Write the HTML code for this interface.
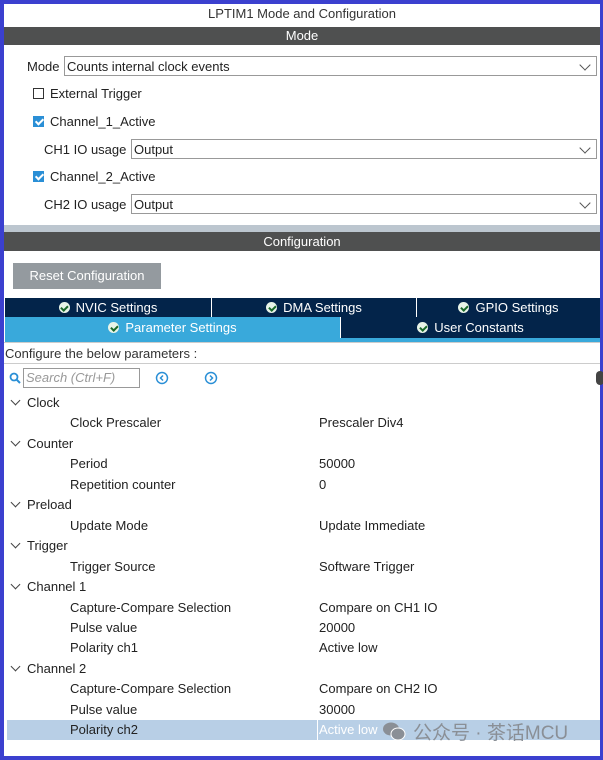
<!DOCTYPE html><html><head><style>
body{margin:0;width:603px;height:760px;background:#3b40cf;font-family:"Liberation Sans",sans-serif;position:relative;overflow:hidden}
.p{position:absolute;left:4px;top:4px;width:596px;height:752px;background:#fff}
.a{position:absolute;font-size:13px;color:#222;white-space:nowrap}
.bar{position:absolute;left:0;width:596px;height:18px;background:#4f5050;color:#fff;text-align:center;font-size:13px;line-height:18px}
.sel{position:absolute;height:20px;border:1px solid #999;background:#fff;font-size:13px;line-height:19px;padding-left:2px;box-sizing:border-box;color:#222}
.sel:after{content:"";position:absolute;right:7px;top:4px;width:7px;height:7px;border-right:1px solid #555;border-bottom:1px solid #555;transform:rotate(45deg)}
.cb{position:absolute;width:11px;height:11px;border:1px solid #333;box-sizing:border-box}
.cb.on{background:#2a8fd6;border-color:#2a8fd6}
.cb.on:after{content:"";position:absolute;left:3px;top:0;width:3px;height:6px;border-right:2px solid #fff;border-bottom:2px solid #fff;transform:rotate(45deg)}
.tab{position:absolute;height:19px;background:#03244a;color:#fff;font-size:13px;line-height:19px;text-align:center;box-sizing:border-box;border-right:1px solid #fff}
.ck{display:inline-block;width:11px;height:11px;border-radius:50%;position:relative;margin-right:6px;vertical-align:-1px;background:#e8f4e8}
.ck:after{content:"";position:absolute;left:3.5px;top:1.5px;width:2.5px;height:5px;border-right:2px solid #1a6a2a;border-bottom:2px solid #1a6a2a;transform:rotate(45deg)}
.ar{position:absolute;width:6px;height:6px;border-right:1.2px solid #444;border-bottom:1.2px solid #444;transform:rotate(45deg)}
</style></head><body><div class="p">
<div class="a" style="left:0;width:596px;text-align:center;top:2px;color:#333">LPTIM1 Mode and Configuration</div>
<div class="bar" style="top:23px">Mode</div>
<div class="a" style="left:23px;top:55px">Mode</div>
<div class="sel" style="left:60px;top:52px;width:533px">Counts internal clock events</div>
<div class="cb" style="left:29px;top:84px"></div><div class="a" style="left:46px;top:82px">External Trigger</div>
<div class="cb on" style="left:29px;top:112px"></div><div class="a" style="left:46px;top:110px">Channel_1_Active</div>
<div class="a" style="left:40px;top:138px">CH1 IO usage</div>
<div class="sel" style="left:127px;top:135px;width:466px">Output</div>
<div class="cb on" style="left:29px;top:167px"></div><div class="a" style="left:46px;top:165px">Channel_2_Active</div>
<div class="a" style="left:40px;top:193px">CH2 IO usage</div>
<div class="sel" style="left:127px;top:190px;width:466px">Output</div>
<div style="position:absolute;left:0;top:221px;width:596px;height:7px;background:#bcc6cf"></div>
<div class="bar" style="top:228px;height:19px;line-height:19px">Configuration</div>
<div style="position:absolute;left:9px;top:259px;width:148px;height:26px;background:#949a9f;color:#fff;font-size:13px;line-height:26px;text-align:center">Reset Configuration</div>
<div class="tab" style="left:1px;top:294px;width:207px"><span class="ck"></span>NVIC Settings</div>
<div class="tab" style="left:208px;top:294px;width:205px"><span class="ck"></span>DMA Settings</div>
<div class="tab" style="left:413px;top:294px;width:183px;border:0"><span class="ck"></span>GPIO Settings</div>
<div class="tab" style="left:1px;top:313px;width:336px;background:#39a9db;height:21px;line-height:21px"><span class="ck"></span>Parameter Settings</div>
<div class="tab" style="left:337px;top:313px;width:259px;height:21px;line-height:21px;border:0"><span class="ck"></span>User Constants</div>
<div style="position:absolute;left:1px;top:334px;width:595px;height:4px;background:#39a9db"></div>
<div style="position:absolute;left:0;top:338px;width:596px;height:1px;background:#ccc"></div>
<div class="a" style="left:1px;top:342px;color:#333">Configure the below parameters :</div>
<div style="position:absolute;left:0;top:359px;width:596px;height:1px;background:#ccc"></div>
<svg style="position:absolute;left:5px;top:368px" width="12" height="12"><circle cx="5" cy="5" r="3.5" fill="none" stroke="#2a8fd6" stroke-width="1.8"/><line x1="7.5" y1="7.5" x2="11" y2="11" stroke="#2a8fd6" stroke-width="2"/></svg>
<div style="position:absolute;left:19px;top:364px;width:117px;height:20px;border:1px solid #999;box-sizing:border-box;font-size:13px;font-style:italic;color:#999;line-height:18px;padding-left:2px">Search (Ctrl+F)</div>
<svg style="position:absolute;left:151px;top:367px" width="14" height="14"><circle cx="7" cy="7" r="5.5" fill="none" stroke="#2a8fd6" stroke-width="1.5"/><path d="M8 4.5L5.5 7L8 9.5" fill="none" stroke="#2a8fd6" stroke-width="1.5"/></svg>
<svg style="position:absolute;left:200px;top:367px" width="14" height="14"><circle cx="7" cy="7" r="5.5" fill="none" stroke="#2a8fd6" stroke-width="1.5"/><path d="M6 4.5L8.5 7L6 9.5" fill="none" stroke="#2a8fd6" stroke-width="1.5"/></svg>
<div style="position:absolute;left:592px;top:367px;width:8px;height:14px;border-radius:7px;background:#444"></div>
<div style="position:absolute;left:3px;top:716px;width:593px;height:20px;background:#b8cfe6"></div>
<div style="position:absolute;left:313px;top:716px;width:1px;height:20px;background:#fff"></div>
<div id="t"></div>
</div>
<script>
var rows=[[1,"Clock"],[0,"Clock Prescaler","Prescaler Div4"],[1,"Counter"],[0,"Period","50000"],[0,"Repetition counter","0"],[1,"Preload"],[0,"Update Mode","Update Immediate"],[1,"Trigger"],[0,"Trigger Source","Software Trigger"],[1,"Channel 1"],[0,"Capture-Compare Selection","Compare on CH1 IO"],[0,"Pulse value","20000"],[0,"Polarity ch1","Active low"],[1,"Channel 2"],[0,"Capture-Compare Selection","Compare on CH2 IO"],[0,"Pulse value","30000"],[0,"Polarity ch2","Active low"]];
var h="";rows.forEach(function(r,i){var y=391+i*20.45;if(r[0]){h+='<div class="ar" style="left:8px;top:'+(y+2)+'px"></div><div class="a" style="left:23px;top:'+y+'px">'+r[1]+'</div>';}else{h+='<div class="a" style="left:66px;top:'+y+'px">'+r[1]+'</div><div class="a" style="left:315px;top:'+y+'px;'+(i==16?'color:#fff':'')+'">'+r[2]+'</div>';}});
document.getElementById("t").innerHTML=h;
</script>
<svg style="position:absolute;left:382px;top:721px" width="24" height="20"><ellipse cx="9" cy="8" rx="8" ry="6.5" fill="#8a8f96"/><ellipse cx="16" cy="13" rx="7" ry="6" fill="#8a8f96" stroke="#fff" stroke-width="1"/></svg>
<div class="a" style="left:413px;top:718px;font-size:19px;color:#8a8f96;font-family:'Liberation Sans','Noto Sans CJK SC',sans-serif">公众号 · 茶话MCU</div>
</body></html>
